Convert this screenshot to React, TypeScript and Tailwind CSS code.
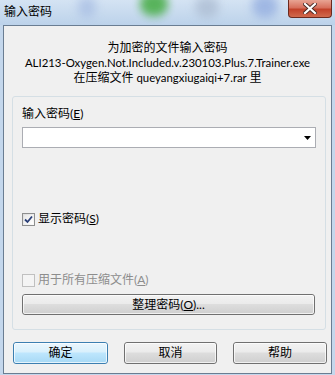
import React from "react";

const font = "font-['Lato','Noto_Sans_CJK_SC',sans-serif]";

function WinButton({ label, primary = false, className = "" }: { label: React.ReactNode; primary?: boolean; className?: string }) {
  return (
    <div
      className={`relative flex items-center justify-center rounded-[3px] border text-[12px] text-black ${
        primary
          ? "border-[#3c7fb1] bg-[linear-gradient(to_bottom,#eaf6fd_0%,#d9f0fc_45%,#bee6fd_50%,#a7d9f5_100%)]"
          : "border-[#707070] bg-[linear-gradient(to_bottom,#f2f2f2_0%,#ebebeb_45%,#dddddd_50%,#cfcfcf_100%)]"
      } ${className}`}
    >
      <div className="pointer-events-none absolute inset-0 rounded-[2px] border border-white/70" />
      <span className="relative">{label}</span>
    </div>
  );
}

function CheckBox({ checked, disabled }: { checked?: boolean; disabled?: boolean }) {
  return (
    <div
      className={`flex h-[13px] w-[13px] items-center justify-center border ${
        disabled ? "border-[#c0c0c0] bg-[#f4f4f4]" : "border-[#8e8f8f] bg-[linear-gradient(135deg,#dcdcdc,#fbfbfb)]"
      }`}
    >
      <div
        className={`flex h-[9px] w-[9px] items-center justify-center ${
          disabled ? "bg-[#f4f4f4]" : "bg-[linear-gradient(135deg,#e8e8e8,#ffffff)]"
        }`}
      >
        {checked && (
          <svg width="9" height="9" viewBox="0 0 9 9">
            <path d="M1 4.5 L3.5 7 L8 1.5" fill="none" stroke="#2a3f78" strokeWidth="1.8" />
          </svg>
        )}
      </div>
    </div>
  );
}

export default function App() {
  return (
    <div className={`relative flex h-[375px] w-[335px] flex-col overflow-hidden bg-[#c4d7ec] ${font}`}>
      {/* title bar */}
      <div className="relative h-[25px] shrink-0 overflow-hidden bg-[linear-gradient(to_bottom,#d4e3f3,#bcd2ea)]">
        <div className="absolute left-[78px] top-[-4px] h-[22px] w-[18px] rounded-full bg-[#9fb6e0] opacity-60 blur-[5px]" />
        <div className="absolute left-[140px] top-[-8px] h-[24px] w-[28px] rounded-full bg-[#4caf4c] opacity-90 blur-[4px]" />
        <div className="absolute left-[195px] top-[-4px] h-[22px] w-[24px] rounded-full bg-[#a9b9cf] opacity-70 blur-[5px]" />
        <div className="absolute left-[252px] top-[-6px] h-[24px] w-[26px] rounded-full bg-[#94aee0] opacity-80 blur-[5px]" />
        <div className="absolute left-[4px] top-[4px] text-[12px] leading-[15px] text-black">输入密码</div>
        <div className="absolute left-[288px] top-0 flex h-[18px] w-[44px] items-center justify-center rounded-b-[4px] border border-t-0 border-[#6b2a1f] bg-[linear-gradient(to_bottom,#e8a494_0%,#d7705d_45%,#c2422b_55%,#d06a4e_100%)]">
          <svg width="14" height="11" viewBox="0 0 14 11">
            <path d="M2 1 L12 10 M12 1 L2 10" stroke="#4a2a25" strokeWidth="4" strokeLinecap="square" />
            <path d="M2 1 L12 10 M12 1 L2 10" stroke="#ffffff" strokeWidth="2.2" strokeLinecap="square" />
          </svg>
        </div>
      </div>

      {/* client area */}
      <div className="mx-[3px] mb-[1px] flex flex-1 flex-col border border-[#6a7d92] bg-[#f0f0f0] text-[12px] text-black">
        <div className="flex flex-col items-center pt-[14px] leading-[15px]">
          <div>为加密的文件输入密码</div>
          <div className="text-[11.4px]">ALI213-Oxygen.Not.Included.v.230103.Plus.7.Trainer.exe</div>
          <div>
            在压缩文件<span className="text-[11.4px]"> queyangxiugaiqi+7.rar </span>里
          </div>
        </div>

        <div className="ml-[8px] mt-[11px] flex h-[234px] w-[314px] flex-col rounded-[3px] border border-[#d5dfe5] px-[9px]">
          <div className="mt-[10px] leading-[14px]">
            输入密码(<span className="underline">E</span>)
          </div>
          <div className="mt-[6px] flex h-[21px] w-[294px] items-center justify-end border border-[#abadb3] bg-white pr-[4px]">
            <svg width="7" height="4" viewBox="0 0 7 4">
              <path d="M0 0 H7 L3.5 4 Z" fill="#000" />
            </svg>
          </div>
          <div className="mt-[64px] flex items-center gap-[3px]">
            <CheckBox checked />
            <span className="leading-[14px]">
              显示密码(<span className="underline">S</span>)
            </span>
          </div>
          <div className="mt-[47px] flex items-center gap-[3px] text-[#8d8d8d]">
            <CheckBox disabled />
            <span className="leading-[14px]">
              用于所有压缩文件(<span className="underline">A</span>)
            </span>
          </div>
          <WinButton className="mt-[7px] h-[21px] w-[293px]" label={<>整理密码(<span className="underline">O</span>)...</>} />
        </div>

        <div className="ml-[9px] mt-[12px] flex gap-[16px]">
          <WinButton primary className="h-[22px] w-[95px]" label="确定" />
          <WinButton className="h-[22px] w-[93px]" label="取消" />
          <WinButton className="h-[22px] w-[94px]" label="帮助" />
        </div>
      </div>
    </div>
  );
}
